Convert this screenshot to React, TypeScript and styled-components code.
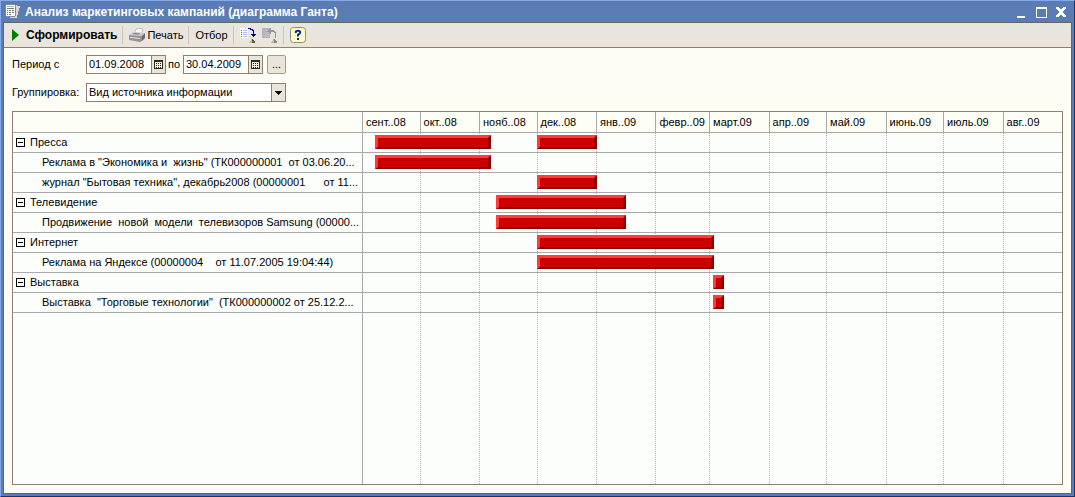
import React from "react";
import styled, { createGlobalStyle } from "styled-components";

const FONT = '"Liberation Sans", Arial, sans-serif';
const LINE = "#aaa8aa";
const EDGE = "#8c8070";

const GlobalStyle = createGlobalStyle`
  * { box-sizing: border-box; }
  body { margin: 0; font: 11px/13px ${FONT}; color: #000; }
  button, input, select { font: inherit; color: inherit; margin: 0; padding: 0; border-radius: 0; }
`;

const Window = styled.div`
  min-height: 100vh;
  display: flex;
  flex-direction: column;
  padding: 0 2px 2px;
  background: #5b7bb5;
  border: 1px solid;
  border-color: #84aaea #16356f #16356f #84aaea;
`;

const TitleBar = styled.header`
  height: 21px;
  display: flex;
  align-items: center;
  padding: 1px 1px 0 2px;
  gap: 4px;
  color: #fff;
`;

const Title = styled.h1`
  flex: 1;
  margin: 0;
  font-size: 12px;
  line-height: 20px;
  font-weight: bold;
  white-space: nowrap;
`;

const WindowButton = styled.button`
  width: 20px;
  height: 20px;
  border: 0;
  background: none;
  display: flex;
  align-items: center;
  justify-content: center;
`;

const WindowButtons = styled.div`
  display: flex;
`;

const Client = styled.main`
  flex: 1;
  display: flex;
  flex-direction: column;
  border: 1px solid #66665f;
  background: #fdfdf5;
`;

const Toolbar = styled.div`
  height: 25px;
  display: flex;
  align-items: center;
  padding-left: 5px;
  background: linear-gradient(#e6e6e0, #ebe4db);
  border-bottom: 1px solid ${EDGE};
`;

const ToolButton = styled.button<{ $bold?: boolean; $gap?: number }>`
  height: 22px;
  display: flex;
  align-items: center;
  gap: ${(p) => p.$gap ?? 0}px;
  padding: 0 3px;
  border: 0;
  background: none;
  white-space: nowrap;
  font-size: ${(p) => (p.$bold ? 12 : 11)}px;
  font-weight: ${(p) => (p.$bold ? "bold" : "normal")};
`;

const Separator = styled.span`
  width: 1px;
  height: 18px;
  margin: 0 3px 0 2px;
  background: #cdc4b4;
`;

const Body = styled.div`
  flex: 1;
  display: flex;
  flex-direction: column;
  padding: 7px 8px 8px;
`;

const Filters = styled.form`
  display: flex;
  flex-direction: column;
  gap: 9px;
  margin-bottom: 9px;
`;

const FilterRow = styled.div`
  height: 19px;
  display: flex;
  align-items: center;
`;

const Label = styled.label<{ $wide?: boolean }>`
  width: ${(p) => (p.$wide ? "74px" : "17px")};
  padding-left: ${(p) => (p.$wide ? 0 : 2)}px;
  flex: none;
  white-space: nowrap;
`;

const Field = styled.div<{ $width: number }>`
  width: ${(p) => p.$width}px;
  height: 19px;
  display: flex;
  position: relative;
  border: 1px solid ${EDGE};
  background: #fff;
`;

const DateInput = styled.input`
  flex: 1;
  min-width: 0;
  border: 0;
  padding-left: 2px;
  background: none;
  outline: 0;
`;

const FieldButton = styled.button`
  width: 14px;
  border: 0;
  border-left: 1px solid ${EDGE};
  background: #e9e5da;
  display: flex;
  align-items: center;
  justify-content: center;
`;

const MoreButton = styled.button`
  width: 19px;
  height: 19px;
  margin-left: 4px;
  border: 1px solid #a39c88;
  border-radius: 2px;
  background: #e9e5da;
`;

const GroupSelect = styled.select`
  flex: 1;
  appearance: none;
  border: 0;
  padding-left: 2px;
  background: none;
  outline: 0;
`;

const SelectArrow = styled.span`
  position: absolute;
  right: 0;
  top: 0;
  bottom: 0;
  width: 14px;
  border-left: 1px solid ${EDGE};
  background: #e9e5da;
  display: flex;
  align-items: center;
  justify-content: center;
  pointer-events: none;
`;

const Chart = styled.table`
  flex: 1;
  display: flex;
  flex-direction: column;
  border: 1px solid ${EDGE};
  background: #fcfefc;
`;

const ChartHead = styled.thead`
  display: block;
  background: #fdfef6;
`;

const ChartBody = styled.tbody`
  flex: 1;
  display: flex;
  flex-direction: column;
`;

const Row = styled.tr<{ $height?: number; $fill?: boolean }>`
  display: grid;
  grid-template-columns: 349px 1fr;
  ${(p) => (p.$fill ? "flex: 1;" : `height: ${p.$height ?? 20}px; border-bottom: 1px solid ${LINE};`)}
`;

const NameCell = styled.th<{ $child?: boolean }>`
  display: flex;
  align-items: center;
  gap: 5px;
  min-width: 0;
  overflow: hidden;
  padding: 0 0 0 ${(p) => (p.$child ? 29 : 3)}px;
  font-weight: normal;
  text-align: left;
  white-space: pre;
`;

const Timeline = styled.td`
  position: relative;
  display: grid;
  grid-template-columns: 30fr 31fr 30fr 31fr 31fr 28fr 31fr 30fr 31fr 30fr 31fr 31fr;
  padding: 0;
`;

const Month = styled.div`
  min-width: 0;
  padding: 0 0 0 3px;
  border-left: 1px solid ${LINE};
  line-height: 20px;
  white-space: nowrap;
`;

const Slot = styled.div`
  border-left: 1px dotted #b4b4b4;
  &:first-child { border-left: 1px solid ${LINE}; }
`;

const Bar = styled.div`
  position: absolute;
  top: 2px;
  height: 14px;
  background: #cc0000;
  border: solid;
  border-width: 3px 3px 2px;
  border-color: #ff3c3c #900000 #900000 #ff3c3c;
`;

const Toggle = styled.button`
  width: 9px;
  height: 9px;
  border: 1px solid #000;
  background: #fff;
  display: flex;
  align-items: center;
  justify-content: center;
  &::before { content: ""; width: 5px; height: 1px; background: #000; }
`;

const JournalIcon = () => (
  <svg width="16" height="16" viewBox="0 0 16 16" shapeRendering="crispEdges" aria-hidden="true">
    <path d="M6 1h6v1h3v2h-1v3h-1v4h-1v4H8v-1H5z" fill="#d8d8d4" />
    <path d="M15 3h1v2h-1v3h-1v3h-1v4h-1v-4h1V8h1V5h1zM6 14h6v1H6z" fill="#74808c" />
    <path d="M1 1h9v11H1z" fill="#fff" />
    <path d="M0 1h1v11H0zM1 0h9v1H1zM1 12h9v1H1zM10 1h1v11h-1z" fill="#7c889c" />
    <path d="M2 2h7v1H2z" fill="#b4b4a8" />
    <path d="M2 4h7v1H2zM2 6h1v1H2zM4 6h2v1H4zM7 6h2v1H7zM2 8h1v1H2zM4 8h2v1H4zM7 8h2v1H7zM2 10h1v1H2zM4 10h2v1H4z" fill="#707c90" />
  </svg>
);

const PrinterIcon = () => (
  <svg width="16" height="14" viewBox="0 0 16 14" aria-hidden="true">
    <path d="M5 5l3-5 6 1-2 5z" fill="#fafafa" stroke="#a8a8a8" strokeWidth=".7" />
    <path d="M0 7l4-3 12 1-3 3z" fill="#c9c9c9" />
    <path d="M0 7l13 1v5l-2 1-11-2z" fill="#929292" />
    <path d="M13 8l3-3v5l-3 3z" fill="#686868" />
    <path d="M1 9l10 1v1L1 10z" fill="#e4e4e4" />
    <path d="M5 5l6 .6-1 1-6-.6z" fill="#777" />
  </svg>
);

const TransferIcon = ({ back }: { back?: boolean }) => (
  <svg width="16" height="16" viewBox="0 0 16 16" shapeRendering="crispEdges" aria-hidden="true">
    <path d="M0 1h8v10H0z" fill={back ? "#b4b4b8" : "#fff"} />
    {!back && <path d="M1 3h1v1H1zM1 5h1v1H1zM1 7h1v1H1zM1 9h1v1H1z" fill="#4a8a5a" />}
    <path d="M3 3h4v1H3zM3 5h4v1H3zM3 7h4v1H3zM3 9h4v1H3z" fill={back ? "#c4c4c8" : "#a9c3e6"} />
    {back ? (
      <path d="M5 4h1V3h1V2h1V1h1v2h3v1h1v1h1v6h-1V6h-1V5H9v2H8V6H7V5H5z" fill="#9494a4" />
    ) : (
      <path d="M8 1h3v1h2v1h1v4h2v1h-1v1h-1v1h-1V9h-1V8h-1V7h2V4h-1V3h-2V2H8z" fill="#00009c" />
    )}
    <path d="M12 12h1v1h1v1h1v2h-3z" fill={back ? "#8c8a80" : "#5c5c40"} />
    <path d="M11 12h1v4H9v-1h1v-1h1z" fill={back ? "#b8b6a4" : "#c4c090"} />
  </svg>
);

const HelpIcon = () => (
  <svg width="16" height="16" viewBox="0 0 16 16" aria-hidden="true">
    <rect x=".5" y=".5" width="15" height="15" rx="3" fill="#ffffc8" stroke="#8c8c80" />
    <path d="M5.8 6V5Q5.8 3.8 8 3.8T10.2 5.4Q10.2 6.6 8 7.6V9.4" fill="none" stroke="#00309c" strokeWidth="2" />
    <path d="M7 11h2v2H7z" fill="#00309c" />
  </svg>
);

const CalendarIcon = () => (
  <svg width="9" height="9" viewBox="0 0 9 9" shapeRendering="crispEdges" aria-hidden="true">
    <path d="M0 0h9v9H0z" fill="#302820" />
    <path d="M1 2h7v6H1z" fill="#f4f0e4" />
    <path d="M2 3h1v1H2zM4 3h1v1H4zM6 3h1v1H6zM2 5h1v1H2zM4 5h1v1H4zM6 5h1v1H6zM2 7h1v1H2zM4 7h1v1H4zM6 7h1v1H6z" fill="#302820" />
  </svg>
);

const MONTHS = ["сент..08", "окт..08", "нояб..08", "дек..08", "янв..09", "февр..09", "март.09", "апр..09", "май.09", "июнь.09", "июль.09", "авг..09"];
const DAYS = 365;

type Item = { name: string; child?: boolean; bars: [number, number][] };

/* Bars run from and to a day counted from 1 September 2008. */
const ITEMS: Item[] = [
  { name: "Пресса", bars: [[7, 67], [91, 122]] },
  { name: 'Реклама в "Экономика и  жизнь" (ТК000000001  от 03.06.20...', child: true, bars: [[7, 67]] },
  { name: 'журнал "Бытовая техника", декабрь2008 (00000001      от 11...', child: true, bars: [[91, 122]] },
  { name: "Телевидение", bars: [[70, 137]] },
  { name: "Продвижение  новой  модели  телевизоров Samsung (00000...", child: true, bars: [[70, 137]] },
  { name: "Интернет", bars: [[91, 183]] },
  { name: "Реклама на Яндексе (00000004    от 11.07.2005 19:04:44)", child: true, bars: [[91, 183]] },
  { name: "Выставка", bars: [[183, 188]] },
  { name: 'Выставка  "Торговые технологии"  (ТК000000002 от 25.12.2...', child: true, bars: [[183, 188]] },
];

const Slots = () => (
  <>
    {MONTHS.map((m) => (
      <Slot key={m} />
    ))}
  </>
);

export default function App() {
  return (
    <Window>
      <GlobalStyle />
      <TitleBar>
        <JournalIcon />
        <Title>Анализ маркетинговых кампаний (диаграмма Ганта)</Title>
        <WindowButtons>
          <WindowButton aria-label="Свернуть">
            <svg width="8" height="12" viewBox="0 0 8 12"><path d="M0 10h8v2H0z" fill="#fff" /></svg>
          </WindowButton>
          <WindowButton aria-label="Развернуть">
            <svg width="11" height="11" viewBox="0 0 11 11" shapeRendering="crispEdges"><path d="M0 0h11v11H0zM1 2v8h9V2z" fill="#fff" fillRule="evenodd" /></svg>
          </WindowButton>
          <WindowButton aria-label="Закрыть">
            <svg width="10" height="10" viewBox="0 0 10 10" shapeRendering="crispEdges">
              <path d="M0 0h3v1h1v1h2V1h1V0h3v2H9v1H8v1H7v2h1v1h1v1h1v2H7V9H6V8H4v1H3v1H0V8h1V7h1V6h1V4H2V3H1V2H0z" fill="#fff" />
            </svg>
          </WindowButton>
        </WindowButtons>
      </TitleBar>
      <Client>
        <Toolbar>
          <ToolButton $bold $gap={7}>
            <svg width="7" height="12" viewBox="0 0 7 12" aria-hidden="true"><path d="M0 0l7 6-7 6z" fill="#008000" /></svg>
            Сформировать
          </ToolButton>
          <Separator />
          <ToolButton $gap={2}>
            <PrinterIcon />
            Печать
          </ToolButton>
          <Separator />
          <ToolButton>Отбор</ToolButton>
          <Separator />
          <ToolButton aria-label="Сохранить значения"><TransferIcon /></ToolButton>
          <ToolButton aria-label="Восстановить значения"><TransferIcon back /></ToolButton>
          <Separator />
          <ToolButton aria-label="Справка"><HelpIcon /></ToolButton>
        </Toolbar>
        <Body>
          <Filters>
            <FilterRow>
              <Label $wide htmlFor="from">Период с</Label>
              <Field $width={80}>
                <DateInput id="from" defaultValue="01.09.2008" />
                <FieldButton type="button" aria-label="Выбрать начало"><CalendarIcon /></FieldButton>
              </Field>
              <Label htmlFor="to">по</Label>
              <Field $width={80}>
                <DateInput id="to" defaultValue="30.04.2009" />
                <FieldButton type="button" aria-label="Выбрать конец"><CalendarIcon /></FieldButton>
              </Field>
              <MoreButton type="button" aria-label="Выбрать период">...</MoreButton>
            </FilterRow>
            <FilterRow>
              <Label $wide htmlFor="group">Группировка:</Label>
              <Field $width={200}>
                <GroupSelect id="group">
                  <option>Вид источника информации</option>
                </GroupSelect>
                <SelectArrow>
                  <svg width="7" height="4" viewBox="0 0 7 4" shapeRendering="crispEdges"><path d="M0 0h7v1H6v1H5v1H4v1H3V3H2V2H1V1H0z" /></svg>
                </SelectArrow>
              </Field>
            </FilterRow>
          </Filters>
          <Chart>
            <ChartHead>
              <Row $height={21}>
                <NameCell as="td" />
                <Timeline>
                  {MONTHS.map((m) => (
                    <Month key={m}>{m}</Month>
                  ))}
                </Timeline>
              </Row>
            </ChartHead>
            <ChartBody>
              {ITEMS.map((item) => (
                <Row key={item.name}>
                  <NameCell scope="row" $child={item.child}>
                    {!item.child && <Toggle aria-label="Свернуть группу" />}
                    <span>{item.name}</span>
                  </NameCell>
                  <Timeline>
                    <Slots />
                    {item.bars.map(([from, to]) => (
                      <Bar key={from} style={{ left: `${(from / DAYS) * 100}%`, width: `calc(${((to - from) / DAYS) * 100}% + 1px)` }} />
                    ))}
                  </Timeline>
                </Row>
              ))}
              <Row $fill>
                <NameCell as="td" />
                <Timeline><Slots /></Timeline>
              </Row>
            </ChartBody>
          </Chart>
        </Body>
      </Client>
    </Window>
  );
}
